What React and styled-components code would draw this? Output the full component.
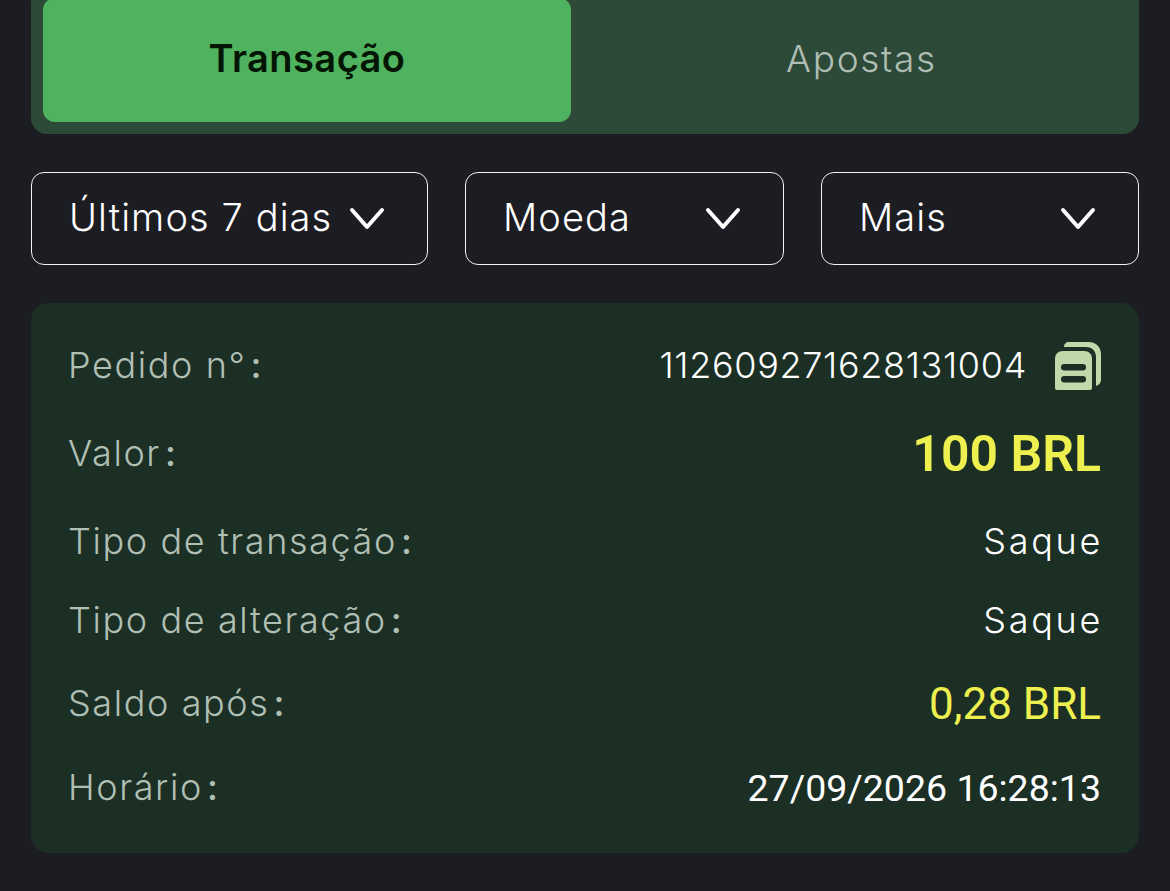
import React from "react";
import styled, { createGlobalStyle } from "styled-components";

const GlobalStyle = createGlobalStyle`
  html, body {
    margin: 0;
    padding: 0;
    height: 100%;
    background: #1c1d22;
    overflow: hidden;
  }
  * {
    box-sizing: border-box;
  }
`;

const Page = styled.div`
  width: 1170px;
  height: 891px;
  padding: 0 31px;
  background: #1c1d22;
  font-family: Inter, "Noto Sans", sans-serif;
  display: flex;
  flex-direction: column;
`;

const TabBar = styled.div`
  margin-top: -14px;
  height: 148px;
  padding: 12px;
  display: grid;
  grid-template-columns: 528px 1fr;
  column-gap: 25px;
  background: #2d4a39;
  border-radius: 16px;
`;

const Tab = styled.div`
  display: flex;
  align-items: center;
  justify-content: center;
  padding-bottom: 4px;
  border-radius: 12px;
  font-size: ${({ $active }) => ($active ? 38 : 37)}px;
  font-weight: ${({ $active }) => ($active ? 600 : 300)};
  letter-spacing: ${({ $active }) => ($active ? "0.45px" : "1.7px")};
  color: ${({ $active }) => ($active ? "#041504" : "#afbdb3")};
  background: ${({ $active }) => ($active ? "#4fb25e" : "transparent")};
`;

const Filters = styled.div`
  margin-top: 38px;
  display: grid;
  grid-template-columns: 397px 319px 318px;
  column-gap: 37px;
`;

const Filter = styled.div`
  height: 93px;
  padding: 0 42px 0 37px;
  display: flex;
  align-items: center;
  justify-content: space-between;
  border: 1.5px solid #f2f2f2;
  border-radius: 13px;
  font-size: 38px;
  font-weight: 300;
  letter-spacing: 1.1px;
  color: #ffffff;
`;

const FilterText = styled.span`
  margin-bottom: 4px;
`;

const Card = styled.div`
  margin-top: 38px;
  height: 550px;
  padding: 24px 38px 24px 37px;
  background: #1c2f25;
  border-radius: 18px;
`;

const Row = styled.div`
  height: ${({ $h }) => $h}px;
  display: flex;
  align-items: center;
  justify-content: space-between;
`;

const Label = styled.span`
  margin-bottom: 2px;
  font-size: 36px;
  font-weight: 300;
  letter-spacing: 1.6px;
  color: #b0bfb4;
`;

const Colon = styled.span`
  margin-left: 4px;
  font-weight: 500;
`;

const Value = styled.span`
  font-family: Roboto, sans-serif;
  font-size: ${({ $size }) => $size || 37.5}px;
  font-weight: ${({ $weight }) => $weight || 400};
  color: ${({ $yellow }) => ($yellow ? "#eef04f" : "#ffffff")};
`;

const OrderValue = styled.div`
  display: flex;
  align-items: center;
  gap: 27px;
`;

const OrderNumber = styled.span`
  margin-bottom: 2px;
  font-size: 36px;
  font-weight: 300;
  letter-spacing: 0.67px;
  color: #ffffff;
`;

const PlainValue = styled.span`
  margin-right: -2px;
  margin-bottom: 2px;
  font-size: 36px;
  font-weight: 300;
  letter-spacing: 2.7px;
  color: #ffffff;
`;

const Chevron = () => (
  <svg width="36" height="26" viewBox="0 0 36 26" fill="none">
    <path d="M3 4 L18 21 L33 4" stroke="#fff" strokeWidth="4" strokeLinecap="round" strokeLinejoin="round" />
  </svg>
);

const CopyIcon = () => (
  <svg width="47" height="48" viewBox="0 0 47 48">
    <path
      d="M10 5 C10 2 12 0 15 0 H35 C42 0 47 5 47 12 V38 C47 41 45 43 42 44 V15 C42 9 38 5 32 5 Z"
      fill="#c0d8aa"
    />
    <path
      d="M9 9 H30 C35 9 38 12 38 17 V46 C38 47 37 48 36 48 H3 C2 48 1 47 1 46 V17 C1 12 4 9 9 9 Z"
      fill="#c0d8aa"
    />
    <rect x="7" y="22" width="25" height="6.5" rx="3.2" fill="#1c2f25" />
    <rect x="7" y="34" width="25" height="6.5" rx="3.2" fill="#1c2f25" />
  </svg>
);

const rows = [
  { label: "Valor", value: "100 BRL", h: 98, size: 50, weight: 600, yellow: true },
  { label: "Tipo de transação", value: "Saque", h: 78, plain: true },
  { label: "Tipo de alteração", value: "Saque", h: 80, plain: true },
  { label: "Saldo após", value: "0,28 BRL", h: 86, size: 44, yellow: true },
  { label: "Horário", value: "27/09/2026 16:28:13", h: 82 },
];

export default function App() {
  return (
    <Page>
      <GlobalStyle />
      <TabBar>
        <Tab $active>Transação</Tab>
        <Tab>Apostas</Tab>
      </TabBar>
      <Filters>
        <Filter>
          <FilterText>Últimos 7 dias</FilterText>
          <Chevron />
        </Filter>
        <Filter>
          <FilterText>Moeda</FilterText>
          <Chevron />
        </Filter>
        <Filter>
          <FilterText>Mais</FilterText>
          <Chevron />
        </Filter>
      </Filters>
      <Card>
        <Row $h={78}>
          <Label>
            Pedido n°<Colon>:</Colon>
          </Label>
          <OrderValue>
            <OrderNumber>112609271628131004</OrderNumber>
            <CopyIcon />
          </OrderValue>
        </Row>
        {rows.map((r) => (
          <Row key={r.label} $h={r.h}>
            <Label>
              {r.label}
              <Colon>:</Colon>
            </Label>
            {r.plain ? (
              <PlainValue>{r.value}</PlainValue>
            ) : (
              <Value $size={r.size} $weight={r.weight} $yellow={r.yellow}>
                {r.value}
              </Value>
            )}
          </Row>
        ))}
      </Card>
    </Page>
  );
}
